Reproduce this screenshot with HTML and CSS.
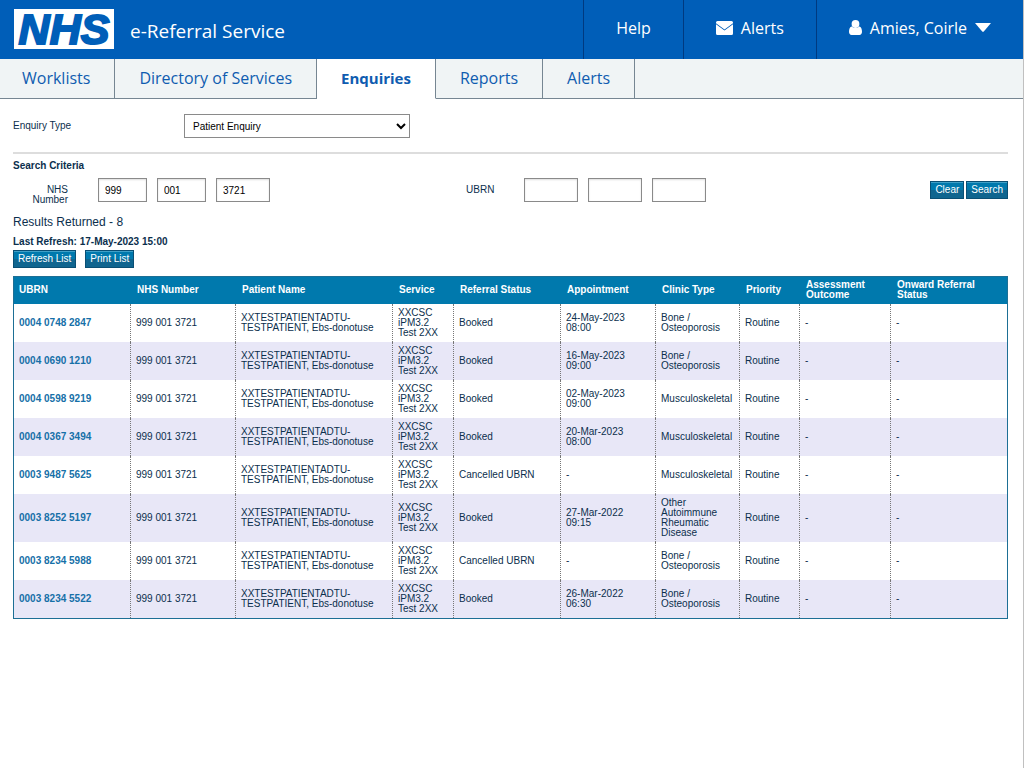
FILE: index.html
```
<!DOCTYPE html>
<html lang="en">

<head>
  <meta charset="UTF-8">
  <meta name="viewport" content="width=device-width, initial-scale=1.0">
  <title>e-Referral Service - Enquiries</title>
  <link rel="stylesheet" href="styles.css">
</head>

<body>
  <header class="banner">
    <a class="logo" href="#">NHS</a>
    <span class="service-name">e-Referral Service</span>
    <nav class="banner-nav">
      <a href="#">Help</a>
      <a href="#">
        <svg class="icon-mail" viewBox="0 0 17 14" width="17" height="14">
          <path d="M1.500 0h14A1.500 1.500 0 0 1 17 1.500v.8L8.500 8.600 0 2.300v-.8A1.500 1.500 0 0 1 1.500 0z" fill="#fff"/>
          <path d="M0 3.300l8.500 6.300L17 3.300v9.200a1.500 1.500 0 0 1-1.500 1.500h-14A1.500 1.500 0 0 1 0 12.500z" fill="#fff"/>
        </svg>
        Alerts
      </a>
      <a href="#">
        <svg class="icon-user" viewBox="0 0 13 15" width="13" height="15">
          <circle cx="6.500" cy="4" r="3.900" fill="#fff"/>
          <path d="M2.800 6.400C.8 6.800 0 8.900 0 11.800 0 13.800 1 15 2.600 15h7.800c1.600 0 2.600-1.200 2.600-3.200 0-2.900-.8-5-2.800-5.400a5.200 5.200 0 0 1-7.400 0z" fill="#fff"/>
        </svg>
        Amies, Coirle
        <svg class="icon-caret" viewBox="0 0 16 9" width="16" height="9">
          <path d="M0 0h16L9 8.200q-1 1-2 0z" fill="#fff"/>
        </svg>
      </a>
    </nav>
  </header>

  <nav class="tabs">
    <a href="#">Worklists</a>
    <a href="#">Directory of Services</a>
    <a href="#" class="active">Enquiries</a>
    <a href="#">Reports</a>
    <a href="#">Alerts</a>
    <span class="tabs-rest"></span>
  </nav>

  <main>
    <form>
      <div class="enquiry-type">
        <label for="enquiryType">Enquiry Type</label>
        <select id="enquiryType">
          <option>Patient Enquiry</option>
        </select>
      </div>

      <h2>Search Criteria</h2>
      <div class="criteria">
        <div class="field">
          <label for="nhs1">NHS Number</label>
          <input type="text" id="nhs1" class="short" value="999">
          <input type="text" aria-label="NHS Number part 2" class="short" value="001">
          <input type="text" aria-label="NHS Number part 3" value="3721">
        </div>
        <div class="field">
          <label for="ubrn1">UBRN</label>
          <input type="text" id="ubrn1">
          <input type="text" aria-label="UBRN part 2">
          <input type="text" aria-label="UBRN part 3">
        </div>
        <div class="actions">
          <button type="reset">Clear</button>
          <button type="button">Search</button>
        </div>
      </div>
    </form>

    <p class="result-count">Results Returned - 8</p>
    <p class="last-refresh">Last Refresh: 17-May-2023 15:00</p>
    <div class="list-actions">
      <button type="button">Refresh List</button>
      <button type="button">Print List</button>
    </div>

    <table>
      <colgroup>
        <col class="col-ubrn">
        <col class="col-nhs">
        <col class="col-name">
        <col class="col-service">
        <col class="col-status">
        <col class="col-appointment">
        <col class="col-clinic">
        <col class="col-priority">
        <col class="col-outcome">
        <col>
      </colgroup>
      <thead>
        <tr>
          <th>UBRN</th>
          <th>NHS Number</th>
          <th>Patient Name</th>
          <th>Service</th>
          <th>Referral Status</th>
          <th>Appointment</th>
          <th>Clinic Type</th>
          <th>Priority</th>
          <th>Assessment<br>Outcome</th>
          <th>Onward Referral<br>Status</th>
        </tr>
      </thead>
      <tbody>
        <tr>
          <td><a href="#">0004 0748 2847</a></td>
          <td>999 001 3721</td>
          <td>XXTESTPATIENTADTU-<br>TESTPATIENT, Ebs-donotuse</td>
          <td>XXCSC<br>iPM3.2<br>Test 2XX</td>
          <td>Booked</td>
          <td>24-May-2023<br>08:00</td>
          <td>Bone /<br>Osteoporosis</td>
          <td>Routine</td>
          <td>-</td>
          <td>-</td>
        </tr>
        <tr>
          <td><a href="#">0004 0690 1210</a></td>
          <td>999 001 3721</td>
          <td>XXTESTPATIENTADTU-<br>TESTPATIENT, Ebs-donotuse</td>
          <td>XXCSC<br>iPM3.2<br>Test 2XX</td>
          <td>Booked</td>
          <td>16-May-2023<br>09:00</td>
          <td>Bone /<br>Osteoporosis</td>
          <td>Routine</td>
          <td>-</td>
          <td>-</td>
        </tr>
        <tr>
          <td><a href="#">0004 0598 9219</a></td>
          <td>999 001 3721</td>
          <td>XXTESTPATIENTADTU-<br>TESTPATIENT, Ebs-donotuse</td>
          <td>XXCSC<br>iPM3.2<br>Test 2XX</td>
          <td>Booked</td>
          <td>02-May-2023<br>09:00</td>
          <td>Musculoskeletal</td>
          <td>Routine</td>
          <td>-</td>
          <td>-</td>
        </tr>
        <tr>
          <td><a href="#">0004 0367 3494</a></td>
          <td>999 001 3721</td>
          <td>XXTESTPATIENTADTU-<br>TESTPATIENT, Ebs-donotuse</td>
          <td>XXCSC<br>iPM3.2<br>Test 2XX</td>
          <td>Booked</td>
          <td>20-Mar-2023<br>08:00</td>
          <td>Musculoskeletal</td>
          <td>Routine</td>
          <td>-</td>
          <td>-</td>
        </tr>
        <tr>
          <td><a href="#">0003 9487 5625</a></td>
          <td>999 001 3721</td>
          <td>XXTESTPATIENTADTU-<br>TESTPATIENT, Ebs-donotuse</td>
          <td>XXCSC<br>iPM3.2<br>Test 2XX</td>
          <td>Cancelled UBRN</td>
          <td>-</td>
          <td>Musculoskeletal</td>
          <td>Routine</td>
          <td>-</td>
          <td>-</td>
        </tr>
        <tr>
          <td><a href="#">0003 8252 5197</a></td>
          <td>999 001 3721</td>
          <td>XXTESTPATIENTADTU-<br>TESTPATIENT, Ebs-donotuse</td>
          <td>XXCSC<br>iPM3.2<br>Test 2XX</td>
          <td>Booked</td>
          <td>27-Mar-2022<br>09:15</td>
          <td>Other<br>Autoimmune<br>Rheumatic<br>Disease</td>
          <td>Routine</td>
          <td>-</td>
          <td>-</td>
        </tr>
        <tr>
          <td><a href="#">0003 8234 5988</a></td>
          <td>999 001 3721</td>
          <td>XXTESTPATIENTADTU-<br>TESTPATIENT, Ebs-donotuse</td>
          <td>XXCSC<br>iPM3.2<br>Test 2XX</td>
          <td>Cancelled UBRN</td>
          <td>-</td>
          <td>Bone /<br>Osteoporosis</td>
          <td>Routine</td>
          <td>-</td>
          <td>-</td>
        </tr>
        <tr>
          <td><a href="#">0003 8234 5522</a></td>
          <td>999 001 3721</td>
          <td>XXTESTPATIENTADTU-<br>TESTPATIENT, Ebs-donotuse</td>
          <td>XXCSC<br>iPM3.2<br>Test 2XX</td>
          <td>Booked</td>
          <td>26-Mar-2022<br>06:30</td>
          <td>Bone /<br>Osteoporosis</td>
          <td>Routine</td>
          <td>-</td>
          <td>-</td>
        </tr>
      </tbody>
    </table>
  </main>
</body>

</html>
```
FILE: styles.css
```
* {
  box-sizing: border-box;
}

body {
  margin: 0;
  min-height: 100vh;
  border-right: 1px solid #c0c0c0;
  background-color: #fff;
  color: #0b2f4d;
  font-family: "Liberation Sans", Arial, sans-serif;
  font-size: 10px;
  line-height: 10px;
}

a {
  text-decoration: none;
}

/* blue banner */

.banner {
  display: flex;
  align-items: center;
  height: 59px;
  padding: 0 0 2px 14px;
  background-color: #005eb8;
  color: #fff;
  font-family: "Open Sans", "Noto Sans", sans-serif;
}

.logo {
  width: 100px;
  height: 40px;
  background-color: #fff;
  color: #005eb8;
  font-family: "Liberation Sans", Arial, sans-serif;
  font-size: 43px;
  font-weight: bold;
  font-style: italic;
  line-height: 40px;
  text-align: center;
  -webkit-text-stroke: 2px #005eb8;
}

.service-name {
  margin-left: 16px;
  padding-top: 4px;
  font-size: 19px;
  line-height: 24px;
}

.banner-nav {
  display: flex;
  height: 59px;
  margin: 0 0 -2px auto;
}

.banner-nav a {
  display: flex;
  align-items: center;
  gap: 8px;
  padding: 0 32px 4px;
  border-left: 1px solid #003a80;
  color: #fff;
  font-size: 16px;
  font-weight: 500;
}

/* tabs */

.tabs {
  display: flex;
  height: 40px;
  font-family: "Open Sans", "Noto Sans", sans-serif;
  font-size: 16px;
  line-height: 38px;
}

.tabs a {
  padding: 0 24px;
  border-right: 1px solid #768692;
  border-bottom: 1px solid #768692;
  background-color: #f0f4f5;
  color: #0f5cb0;
}

.tabs a:first-child {
  padding-left: 22px;
}

.tabs a.active {
  border-bottom-color: #fff;
  background-color: #fff;
  font-size: 15px;
  font-weight: bold;
}

.tabs-rest {
  flex: 1;
  border-bottom: 1px solid #768692;
  background-color: #f0f4f5;
}

/* search form */

main {
  padding: 15px 15px 15px 13px;
}

.enquiry-type {
  display: flex;
  align-items: center;
  padding-bottom: 14px;
  border-bottom: 2px solid #ddd;
}

.enquiry-type label {
  width: 171px;
}

select {
  width: 226px;
  height: 24px;
  padding-left: 4px;
  border: 1px solid #8a8a8a;
  border-radius: 0;
  background-color: #fff;
  color: #000;
  font: inherit;
}

h2 {
  margin: 7px 0;
  font-size: 10px;
  line-height: 10px;
}

.criteria {
  display: grid;
  grid-template-columns: 3fr 3fr 1fr;
}

.field {
  display: flex;
  gap: 10px;
}

.field label {
  width: 55px;
  margin: 7px 20px 0 0;
  text-align: right;
}

.field input {
  width: 54px;
  height: 24px;
  padding: 0 6px;
  border: 1px solid #8a8a8a;
  box-shadow: inset 0 1px 2px #ddd;
  color: #000;
  font: inherit;
}

.field input.short {
  width: 49px;
}

.actions {
  display: flex;
  justify-content: flex-end;
  gap: 2px;
  padding-top: 3px;
}

button {
  height: 18px;
  padding: 0 4px;
  border: 1px solid #0a4f74;
  background: linear-gradient(#0079ad 50%, #10658f 50%);
  box-shadow: inset 0 1px 0 #3fa0c8;
  color: #fff;
  font: inherit;
  cursor: pointer;
}

/* results */

.result-count {
  margin: 9px 0 0;
  font-size: 12px;
  line-height: 16px;
}

.last-refresh {
  margin: 7px 0 3px;
  font-weight: bold;
}

.list-actions {
  display: flex;
  gap: 9px;
  margin-bottom: 8px;
}

table {
  width: 100%;
  table-layout: fixed;
  border: 1px solid #1d6f95;
  border-collapse: separate;
  border-spacing: 0;
}

.col-ubrn { width: 117px; }
.col-nhs { width: 105px; }
.col-name { width: 157px; }
.col-service { width: 61px; }
.col-status { width: 107px; }
.col-appointment { width: 95px; }
.col-clinic { width: 84px; }
.col-priority { width: 60px; }
.col-outcome { width: 91px; }

thead {
  background-color: #0079ad;
}

th {
  height: 27px;
  padding: 0 6px 2px;
  color: #fff;
  text-align: left;
}

td {
  padding: 4px 5px;
  border-right: 1px dotted #777;
}

th:first-child {
  padding-left: 5px;
}

td:last-child {
  border-right: none;
}

tbody tr:nth-child(even) {
  background-color: #e8e7f7;
}

td a {
  color: #1670a8;
  font-weight: bold;
}
```
